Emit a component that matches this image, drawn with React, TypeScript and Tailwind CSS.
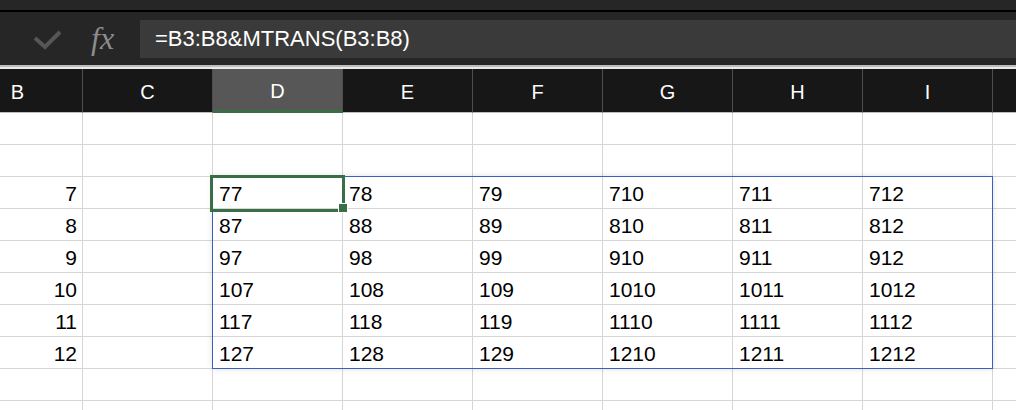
const COLS = ['B', 'C', 'D', 'E', 'F', 'G', 'H', 'I', 'J'];
const ROWS = [5, 6, 7, 8, 9, 10, 11, 12, 13, 14];

function cellValue(row: number, col: string): string {
  if (row < 7 || row > 12) return '';
  if (col === 'B') return String(row);
  const idx = ['D', 'E', 'F', 'G', 'H', 'I'].indexOf(col);
  if (idx === -1) return '';
  return `${row}${idx + 7}`;
}

function FormulaBar() {
  return (
    <div className="flex h-[53px] items-center bg-[#262626]">
      <div className="flex w-[140px] shrink-0 items-center">
        {/* confirm check, disabled */}
        <svg width="30" height="20" viewBox="0 0 30 20" className="ml-[33px] mt-[2px]">
          <polyline points="2,8 12,17 27,2" fill="none" stroke="#565656" strokeWidth="4" />
        </svg>
        <span className="ml-[28px] mb-[2px] font-['Liberation_Serif',serif] text-[32px] italic leading-none text-[#8c8c8c]">
          fx
        </span>
      </div>
      <div className="flex h-[38px] flex-1 items-center bg-[#3a3a3a] pl-[15px] text-[22px] text-white">
        =B3:B8&amp;MTRANS(B3:B8)
      </div>
    </div>
  );
}

function HeaderRow() {
  return (
    <div className="ml-[-47px] flex h-[44px]">
      {COLS.map((c) => (
        <div
          key={c}
          className={`flex h-full w-[130px] shrink-0 items-center justify-center border-r border-r-[#4d4d4d] pt-[3px] text-[20px] text-white ${
            c === 'D' ? 'border-b-[3px] border-b-[#3a6e47] bg-[#575757]' : 'border-b border-b-[#bdbdbd] bg-[#171717]'
          }`}
        >
          {c === 'J' ? '' : c}
        </div>
      ))}
    </div>
  );
}

function GridRow({ row }: { row: number }) {
  return (
    <div className="ml-[-47px] flex h-[32px]">
      {COLS.map((c) => (
        <div
          key={c}
          className={`flex h-full w-[130px] shrink-0 items-center border-r border-b border-[#d6d6d6] pt-[3px] text-[21px] text-black ${
            c === 'B' ? 'justify-end pr-[5px]' : 'pl-[6px]'
          }`}
        >
          {cellValue(row, c)}
        </div>
      ))}
    </div>
  );
}

export default function App() {
  return (
    <div className="relative h-[410px] w-[1016px] overflow-hidden bg-white font-['Liberation_Sans',Arial,sans-serif]">
      <div className="h-[10px] bg-[#262626]" />
      <div className="h-[2px] bg-black" />
      <FormulaBar />
      <div className="h-[2px] bg-[#bcbcbc]" />
      <div className="h-[2px] bg-[#e9e9e9]" />
      <HeaderRow />
      {ROWS.map((r) => (
        <GridRow key={r} row={r} />
      ))}

      {/* spilled range outline */}
      <div className="pointer-events-none absolute left-[212px] top-[176px] h-[193px] w-[781px] border-[1.5px] border-[#3b5fc0] shadow-[0_0_6px_rgba(0,0,0,0.12)]" />
      {/* active cell */}
      <div className="pointer-events-none absolute left-[210px] top-[175px] h-[37px] w-[135px] border-[3px] border-[#3a6e47]" />
      <div className="pointer-events-none absolute left-[338px] top-[203px] h-[10px] w-[10px] border border-white bg-[#3a6e47]" />
    </div>
  );
}
